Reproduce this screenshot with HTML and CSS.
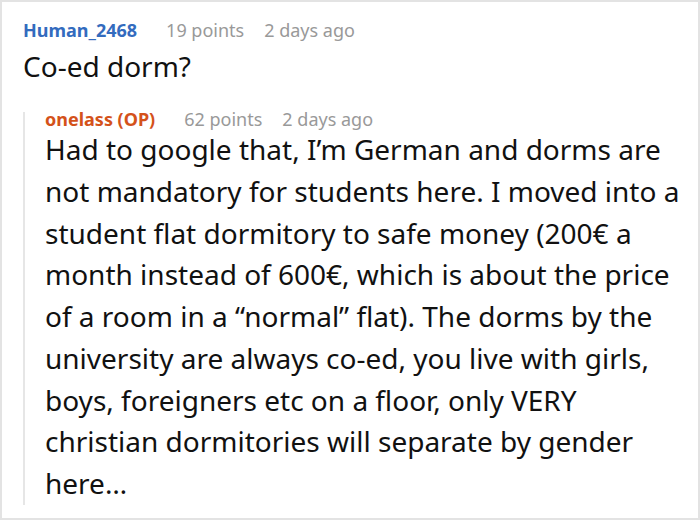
FILE: index.html
```html
<!DOCTYPE html>
<html>
<head>
<meta charset="utf-8">
<link rel="stylesheet" href="styles.css">
</head>
<body>
<div class="frame">
  <div class="comment">
    <div class="meta">
      <span class="author author-blue">Human_2468</span>
      <span class="info">19 points</span>
      <span class="info">2 days ago</span>
    </div>
    <p class="text-q">Co-ed dorm?</p>
    <div class="reply">
      <div class="meta meta-reply">
        <span class="author author-op">onelass (OP)</span>
        <span class="info">62 points</span>
        <span class="info">2 days ago</span>
      </div>
      <p class="text-body">Had to google that, I’m German and dorms are not mandatory for students here. I moved into a student flat dormitory to safe money (200€ a month instead of 600€, which is about the price of a room in a “normal” flat). The dorms by the university are always co-ed, you live with girls, boys, foreigners etc on a floor, only VERY christian dormitories will separate by gender here…</p>
    </div>
  </div>
</div>
</body>
</html>
```
FILE: styles.css
```css
html, body {
  margin: 0;
  padding: 0;
  background: #fff;
}
.frame {
  width: 700px;
  height: 520px;
  box-sizing: border-box;
  border: 2px solid #e3e3e3;
  font-family: "Noto Sans", "Open Sans", sans-serif;
  color: #111;
  overflow: hidden;
}
.comment {
  padding: 16px 0 0 21px;
}
.meta {
  display: flex;
  align-items: baseline;
  gap: 20px;
  font-size: 18px;
  line-height: 24px;
}
.meta-reply {
  line-height: 14px;
}
.author {
  font-weight: 700;
  margin-right: 9px;
}
.author-blue { color: #336bbe; }
.author-op { color: #d4521a; }
.info { color: #999; }
.text-q {
  margin: 6px 0 0 0;
  font-size: 28px;
  line-height: 36px;
}
.reply {
  margin-top: 28px;
  border-left: 2px solid #e6e6e6;
  padding-left: 20px;
}
.text-body {
  margin: 3.3px 0 -7px 0;
  font-size: 28px;
  line-height: 41.7px;
  width: 648px;
}
```
